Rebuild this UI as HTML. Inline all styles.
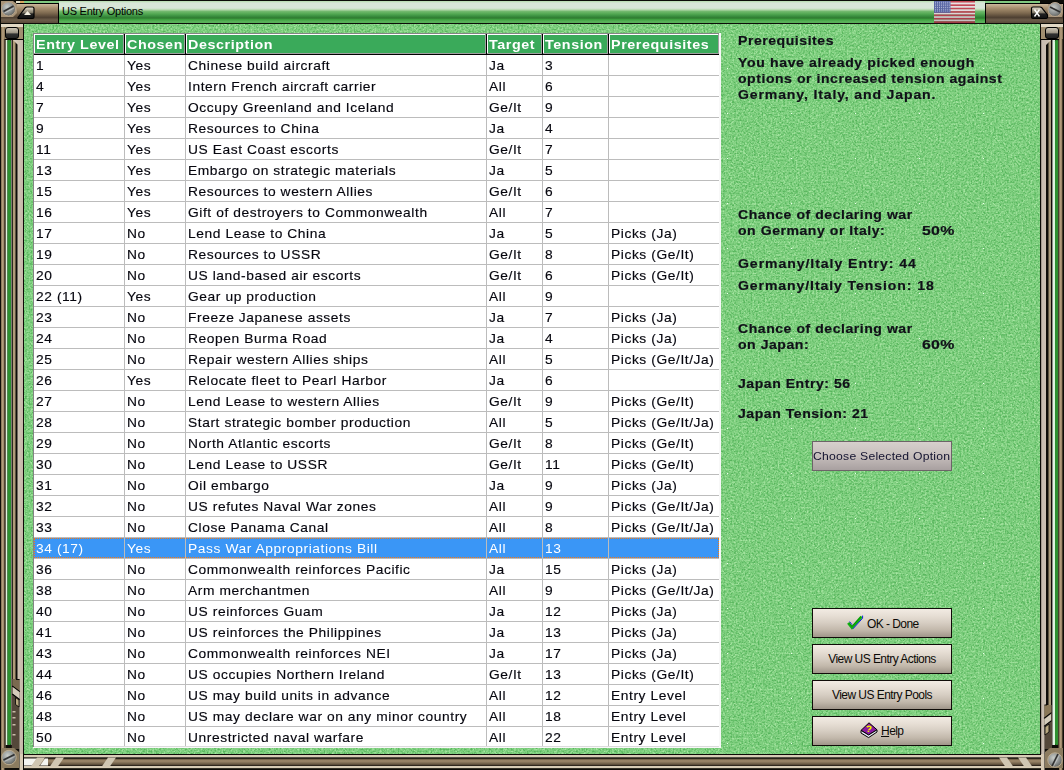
<!DOCTYPE html><html><head><meta charset="utf-8"><style>
*{margin:0;padding:0;box-sizing:border-box}
html,body{width:1064px;height:770px;overflow:hidden;background:#000}
body{position:relative;font-family:"Liberation Sans",sans-serif}
svg.chrome{position:absolute;left:0;top:0}
.a{position:absolute}
.t{position:absolute;white-space:nowrap;font-size:13px;letter-spacing:0.55px;color:#06060e;line-height:20px;-webkit-text-stroke:0.15px currentColor;transform:scaleX(1.06);transform-origin:0 0}
.h{position:absolute;white-space:nowrap;font-size:13.5px;font-weight:bold;letter-spacing:0.55px;color:#fff;line-height:18px;top:35.5px;transform:scaleX(1.06);transform-origin:0 0}
.p{position:absolute;white-space:nowrap;font-size:13px;font-weight:bold;letter-spacing:0.5px;color:#101018;line-height:16px;left:738px;transform:scaleX(1.08);transform-origin:0 0;-webkit-text-stroke:0.2px currentColor}
.btn{position:absolute;left:812px;width:140px;height:30px;border:1px solid #100c08;
 background:linear-gradient(#f2ebe3 0%,#e6ded4 25%,#d6cdc2 50%,#c2b8ab 75%,#a0968a 100%)}
.bt2{position:absolute;white-space:nowrap;font-size:12px;letter-spacing:-0.55px;color:#0c0a06;line-height:14px}
.bt{position:absolute;white-space:nowrap;font-size:11px;letter-spacing:-0.15px;color:#141008;width:100%;text-align:center;line-height:14px;left:0}
</style></head><body>
<svg class="chrome" width="1064" height="770" viewBox="0 0 1064 770">
<defs>
<linearGradient id="title" x1="0" y1="0" x2="0" y2="24" gradientUnits="userSpaceOnUse">
 <stop offset="0.042" stop-color="#b4dcac"/>
 <stop offset="0.125" stop-color="#d8e6d8"/>
 <stop offset="0.34" stop-color="#d8e6d8"/>
 <stop offset="0.40" stop-color="#b8dab0"/>
 <stop offset="0.48" stop-color="#70b86c"/>
 <stop offset="0.58" stop-color="#52a852"/>
 <stop offset="0.67" stop-color="#3a9040"/>
 <stop offset="0.75" stop-color="#2e7a30"/>
 <stop offset="0.81" stop-color="#3ea040"/>
 <stop offset="0.90" stop-color="#58b058"/>
 <stop offset="0.96" stop-color="#58b058"/>
</linearGradient>
<linearGradient id="tan" x1="0" y1="3" x2="0" y2="23" gradientUnits="userSpaceOnUse">
 <stop offset="0" stop-color="#d4c2a6"/>
 <stop offset="0.25" stop-color="#a89070"/>
 <stop offset="0.5" stop-color="#7e6a50"/>
 <stop offset="0.72" stop-color="#4e4032"/>
 <stop offset="0.85" stop-color="#6c5c4a"/>
 <stop offset="1" stop-color="#5a4a3a"/>
</linearGradient>
<linearGradient id="knob" x1="0" y1="0" x2="0" y2="1">
 <stop offset="0" stop-color="#d0c8b8"/>
 <stop offset="0.45" stop-color="#a09888"/>
 <stop offset="0.6" stop-color="#303030"/>
 <stop offset="1" stop-color="#202020"/>
</linearGradient>
<linearGradient id="btnA" x1="0" y1="0" x2="0" y2="1">
 <stop offset="0" stop-color="#e8e0d0"/>
 <stop offset="0.5" stop-color="#807868"/>
 <stop offset="0.6" stop-color="#202020"/>
 <stop offset="1" stop-color="#101010"/>
</linearGradient>
<radialGradient id="screw" cx="0.4" cy="0.35" r="0.7">
 <stop offset="0" stop-color="#c8ccc8"/>
 <stop offset="0.6" stop-color="#8c9090"/>
 <stop offset="1" stop-color="#5a5c58"/>
</radialGradient>
<linearGradient id="colL" x1="0" y1="0" x2="1" y2="0">
 <stop offset="0" stop-color="#7a6a4c"/>
 <stop offset="0.5" stop-color="#bca484"/>
 <stop offset="1" stop-color="#7a6a4c"/>
</linearGradient>
<linearGradient id="colR" x1="1" y1="0" x2="0" y2="0">
 <stop offset="0" stop-color="#7a6a4c"/>
 <stop offset="0.5" stop-color="#bca484"/>
 <stop offset="1" stop-color="#7a6a4c"/>
</linearGradient>
<linearGradient id="lt" x1="0" y1="0" x2="1" y2="0">
 <stop offset="0" stop-color="#dcd0c0"/>
 <stop offset="1" stop-color="#c4b8a8"/>
</linearGradient>
<linearGradient id="ltR" x1="0" y1="0" x2="1" y2="0">
 <stop offset="0" stop-color="#c8bcb0"/>
 <stop offset="0.7" stop-color="#ccc0b2"/>
 <stop offset="1" stop-color="#e4dccc"/>
</linearGradient>
<linearGradient id="bot" x1="0" y1="758" x2="0" y2="766" gradientUnits="userSpaceOnUse">
 <stop offset="0" stop-color="#4a3c2c"/>
 <stop offset="0.35" stop-color="#a08a6c"/>
 <stop offset="0.65" stop-color="#7a6850"/>
 <stop offset="1" stop-color="#3c3024"/>
</linearGradient>
<filter id="n1" x="0" y="0" width="100%" height="100%" color-interpolation-filters="sRGB">
 <feTurbulence type="fractalNoise" baseFrequency="0.55" numOctaves="2" seed="3"/>
 <feColorMatrix type="matrix" values="0 0 0 0 0.66  0 0 0 0 0.90  0 0 0 0 0.64  3.0 0 0 0 -1.3"/>
</filter>
<filter id="n2" x="0" y="0" width="100%" height="100%" color-interpolation-filters="sRGB">
 <feTurbulence type="fractalNoise" baseFrequency="0.55" numOctaves="2" seed="11"/>
 <feColorMatrix type="matrix" values="0 0 0 0 0.34  0 0 0 0 0.71  0 0 0 0 0.36  3.0 0 0 0 -1.3"/>
</filter>
</defs>
<rect x="0" y="0" width="1064" height="770" fill="#2a2218"/>
<rect x="0" y="0" width="1064" height="24" fill="#0c0c08"/>
<rect x="16" y="1" width="1024" height="2" fill="#80c880"/>
<rect x="16" y="1" width="4" height="2" fill="#e8e4d0"/>
<rect x="20" y="1" width="4" height="2" fill="#d8a860"/>
<rect x="59" y="1" width="926" height="22" fill="url(#title)"/>
<rect x="1" y="3" width="58" height="20" fill="#000"/>
<rect x="1" y="4" width="57" height="19" fill="url(#tan)"/>
<path d="M1 1 L13 1 L17 4 L17 13 L13 17 L1 17 Z" fill="#a89478"/>
<circle cx="8.5" cy="9" r="7" fill="url(#screw)" stroke="#b8a48c" stroke-width="1"/>
<path d="M3.5 11.5 L13.5 6" stroke="#303030" stroke-width="1.6"/>
<path d="M4.5 13 L14 8" stroke="#e0e0e0" stroke-width="0.8" opacity="0.7"/>
<path d="M18 17.5 L25.5 7.5 Q26 7 27 7 L32.5 7 Q34 7 34 8.5 L34 17 Q34 18.5 32.5 18.5 L19 18.5 Q17.5 18.5 18 17.5 Z" fill="url(#btnA)" stroke="#000" stroke-width="1.2"/>
<path d="M24 15 L27.5 11 L31 15 Z" fill="#f4f0e0"/>
<rect x="985" y="3" width="79" height="20" fill="#000"/>
<rect x="986" y="4" width="77" height="19" fill="url(#tan)"/>
<path d="M1048 4 L1062 4 L1063 12 L1062 17 L1048 17 Z" fill="#a89478"/>
<circle cx="1055" cy="9.5" r="7" fill="url(#screw)" stroke="#b8a48c" stroke-width="1"/>
<path d="M1050 7 L1060 12" stroke="#303030" stroke-width="1.6"/>
<path d="M1031.5 8.5 Q1031.5 7 1033 7 L1040 7 Q1041 7 1041.5 7.5 L1047.5 15 Q1048 18.5 1046 18.5 L1033 18.5 Q1031.5 18.5 1031.5 17 Z" fill="url(#btnA)" stroke="#000" stroke-width="1.2"/>
<path d="M1034.5 9.5 L1039.5 16.5 M1039.5 9.5 L1034.5 16.5" stroke="#fff" stroke-width="1.4"/>
<rect x="934" y="1.00" width="41" height="1.74" fill="#c84858"/><rect x="934" y="2.69" width="41" height="1.74" fill="#ece4e6"/><rect x="934" y="4.38" width="41" height="1.74" fill="#c84858"/><rect x="934" y="6.08" width="41" height="1.74" fill="#ece4e6"/><rect x="934" y="7.77" width="41" height="1.74" fill="#c84858"/><rect x="934" y="9.46" width="41" height="1.74" fill="#ece4e6"/><rect x="934" y="11.15" width="41" height="1.74" fill="#c84858"/><rect x="934" y="12.85" width="41" height="1.74" fill="#ece4e6"/><rect x="934" y="14.54" width="41" height="1.74" fill="#c84858"/><rect x="934" y="16.23" width="41" height="1.74" fill="#ece4e6"/><rect x="934" y="17.92" width="41" height="1.74" fill="#c84858"/><rect x="934" y="19.62" width="41" height="1.74" fill="#ece4e6"/><rect x="934" y="21.31" width="41" height="1.74" fill="#c84858"/><rect x="934" y="1" width="16.5" height="11.8" fill="#5c6aa8"/><rect x="935.00" y="1.80" width="0.9" height="0.9" fill="#c8cce8"/><rect x="937.05" y="1.80" width="0.9" height="0.9" fill="#c8cce8"/><rect x="939.10" y="1.80" width="0.9" height="0.9" fill="#c8cce8"/><rect x="941.15" y="1.80" width="0.9" height="0.9" fill="#c8cce8"/><rect x="943.20" y="1.80" width="0.9" height="0.9" fill="#c8cce8"/><rect x="945.25" y="1.80" width="0.9" height="0.9" fill="#c8cce8"/><rect x="947.30" y="1.80" width="0.9" height="0.9" fill="#c8cce8"/><rect x="949.35" y="1.80" width="0.9" height="0.9" fill="#c8cce8"/><rect x="935.00" y="3.55" width="0.9" height="0.9" fill="#c8cce8"/><rect x="937.05" y="3.55" width="0.9" height="0.9" fill="#c8cce8"/><rect x="939.10" y="3.55" width="0.9" height="0.9" fill="#c8cce8"/><rect x="941.15" y="3.55" width="0.9" height="0.9" fill="#c8cce8"/><rect x="943.20" y="3.55" width="0.9" height="0.9" fill="#c8cce8"/><rect x="945.25" y="3.55" width="0.9" height="0.9" fill="#c8cce8"/><rect x="947.30" y="3.55" width="0.9" height="0.9" fill="#c8cce8"/><rect x="949.35" y="3.55" width="0.9" height="0.9" fill="#c8cce8"/><rect x="935.00" y="5.30" width="0.9" height="0.9" fill="#c8cce8"/><rect x="937.05" y="5.30" width="0.9" height="0.9" fill="#c8cce8"/><rect x="939.10" y="5.30" width="0.9" height="0.9" fill="#c8cce8"/><rect x="941.15" y="5.30" width="0.9" height="0.9" fill="#c8cce8"/><rect x="943.20" y="5.30" width="0.9" height="0.9" fill="#c8cce8"/><rect x="945.25" y="5.30" width="0.9" height="0.9" fill="#c8cce8"/><rect x="947.30" y="5.30" width="0.9" height="0.9" fill="#c8cce8"/><rect x="949.35" y="5.30" width="0.9" height="0.9" fill="#c8cce8"/><rect x="935.00" y="7.05" width="0.9" height="0.9" fill="#c8cce8"/><rect x="937.05" y="7.05" width="0.9" height="0.9" fill="#c8cce8"/><rect x="939.10" y="7.05" width="0.9" height="0.9" fill="#c8cce8"/><rect x="941.15" y="7.05" width="0.9" height="0.9" fill="#c8cce8"/><rect x="943.20" y="7.05" width="0.9" height="0.9" fill="#c8cce8"/><rect x="945.25" y="7.05" width="0.9" height="0.9" fill="#c8cce8"/><rect x="947.30" y="7.05" width="0.9" height="0.9" fill="#c8cce8"/><rect x="949.35" y="7.05" width="0.9" height="0.9" fill="#c8cce8"/><rect x="935.00" y="8.80" width="0.9" height="0.9" fill="#c8cce8"/><rect x="937.05" y="8.80" width="0.9" height="0.9" fill="#c8cce8"/><rect x="939.10" y="8.80" width="0.9" height="0.9" fill="#c8cce8"/><rect x="941.15" y="8.80" width="0.9" height="0.9" fill="#c8cce8"/><rect x="943.20" y="8.80" width="0.9" height="0.9" fill="#c8cce8"/><rect x="945.25" y="8.80" width="0.9" height="0.9" fill="#c8cce8"/><rect x="947.30" y="8.80" width="0.9" height="0.9" fill="#c8cce8"/><rect x="949.35" y="8.80" width="0.9" height="0.9" fill="#c8cce8"/><rect x="935.00" y="10.55" width="0.9" height="0.9" fill="#c8cce8"/><rect x="937.05" y="10.55" width="0.9" height="0.9" fill="#c8cce8"/><rect x="939.10" y="10.55" width="0.9" height="0.9" fill="#c8cce8"/><rect x="941.15" y="10.55" width="0.9" height="0.9" fill="#c8cce8"/><rect x="943.20" y="10.55" width="0.9" height="0.9" fill="#c8cce8"/><rect x="945.25" y="10.55" width="0.9" height="0.9" fill="#c8cce8"/><rect x="947.30" y="10.55" width="0.9" height="0.9" fill="#c8cce8"/><rect x="949.35" y="10.55" width="0.9" height="0.9" fill="#c8cce8"/><defs><linearGradient id="flsh" x1="0" y1="0" x2="0" y2="1"><stop offset="0" stop-color="#000" stop-opacity="0"/><stop offset="0.5" stop-color="#000" stop-opacity="0.05"/><stop offset="1" stop-color="#000" stop-opacity="0.2"/></linearGradient></defs><rect x="934" y="1" width="41" height="22" fill="url(#flsh)"/>
<rect x="0" y="24" width="24" height="746" fill="#0e0c08"/>
<rect x="1" y="24" width="3.5" height="746" fill="url(#colL)"/>
<rect x="1" y="24" width="22" height="3" fill="#e2d8c4"/>
<rect x="1" y="27" width="22" height="12" fill="#a08e70"/>
<rect x="1" y="27" width="4" height="12" fill="url(#colL)"/>
<rect x="5.5" y="27.5" width="13" height="11" rx="2.5" fill="url(#knob)" stroke="#000" stroke-width="1"/>
<rect x="5" y="39" width="19" height="1" fill="#000"/>
<rect x="4.5" y="40" width="1.3" height="708" fill="#5a4a38"/>
<rect x="5.8" y="40" width="1.7" height="705" fill="#e0f4e0"/>
<rect x="7.5" y="40" width="3.5" height="705" rx="1.2" fill="#2e9030"/>
<rect x="11" y="40" width="0.8" height="705" fill="#a09890"/>
<rect x="12.8" y="40" width="2.7" height="639" fill="#b09c78"/>
<rect x="11.8" y="679" width="7.6" height="70" fill="#54483a"/>
<path d="M13 40 L23 40 L23 754 L19.4 754 L19.4 679 L17.5 679 L17.5 44.5 Z" fill="url(#lt)"/>
<path d="M12.7 679 L19.4 679 L19.4 691 L12.7 686 Z" fill="#7a6a50"/>
<path d="M12.2 686 L19.8 691.6" stroke="#000" stroke-width="1.1"/>
<path d="M12.7 687 L19.4 692 L19.4 699 L12.7 694 Z" fill="#d4ccba"/>
<path d="M12.2 694 L19.8 699.6" stroke="#000" stroke-width="1.1"/>
<path d="M15.5 697.5 L19 700 L19 707 L15.5 704.5 Z" fill="#b8a880" stroke="#000" stroke-width="0.8"/>
<rect x="16" y="679" width="3.4" height="0.9" fill="#000"/>
<rect x="12.5" y="711" width="3" height="1.5" fill="#c8bca8"/>
<rect x="12.5" y="717" width="3" height="1.5" fill="#c8bca8"/>
<rect x="12.5" y="724" width="3" height="1.5" fill="#c8bca8"/>
<rect x="12.5" y="734" width="3" height="1.5" fill="#c8bca8"/>
<rect x="19.4" y="40" width="3.6" height="730" fill="url(#lt)" opacity="0"/>
<rect x="23" y="24" width="1" height="746" fill="#0c0a06"/>
<rect x="19.5" y="754" width="3.5" height="16" fill="#d8ccb6"/>
<path d="M1 748 L14 748 L19 752 L19 768 L1 768 Z" fill="#8c7c60"/>
<circle cx="9" cy="757.5" r="7.2" fill="url(#screw)" stroke="#bcac90" stroke-width="1"/>
<path d="M3.5 760 L14.5 754.5" stroke="#303030" stroke-width="1.6"/>
<path d="M4.5 761.5 L15 756.5" stroke="#e8e8e8" stroke-width="0.7" opacity="0.6"/>
<rect x="1040" y="24" width="24" height="746" fill="#0e0c08"/>
<rect x="1059" y="24" width="3.5" height="746" fill="url(#colR)"/>
<rect x="1041" y="24" width="22" height="3" fill="#e2d8c4"/>
<rect x="1041" y="27" width="22" height="12" fill="#a08e70"/>
<rect x="1059" y="27" width="4" height="12" fill="url(#colR)"/>
<rect x="1045.5" y="27.5" width="13" height="11" rx="2.5" fill="url(#knob)" stroke="#000" stroke-width="1"/>
<rect x="1040" y="39" width="19" height="1" fill="#000"/>
<rect x="1052" y="40" width="1" height="705" fill="#909088"/>
<rect x="1053" y="40" width="2" height="705" fill="#e0f4e0"/>
<rect x="1055" y="40" width="3.3" height="705" rx="1.2" fill="#2e9030"/>
<rect x="1058.3" y="40" width="0.7" height="708" fill="#5a4a38"/>
<rect x="1048.5" y="40" width="2.5" height="665" fill="#a89878"/>
<rect x="1044.5" y="705" width="7.5" height="44" fill="#54483a"/>
<path d="M1051 40 L1041.2 40 L1041.2 754 L1044.5 754 L1044.5 705 L1046 705 L1046 45 Z" fill="url(#ltR)"/>
<path d="M1044.5 705 L1051 705 L1051 713 L1044.5 718 Z" fill="#8a7858"/>
<path d="M1044 718.4 L1051.5 712.6" stroke="#000" stroke-width="1.1"/>
<path d="M1044.5 719 L1051 714 L1051 721 L1044.5 726 Z" fill="#d4ccba"/>
<path d="M1044 726.4 L1051.5 720.6" stroke="#000" stroke-width="1.1"/>
<path d="M1045 727 L1049 724 L1049 732 L1045 735 Z" fill="#b8a880" stroke="#000" stroke-width="0.8"/>
<rect x="1044.5" y="704.5" width="2.5" height="0.9" fill="#000"/>
<rect x="1040" y="24" width="1" height="746" fill="#0c0a06"/>
<rect x="1041" y="754" width="3.5" height="16" fill="#d8ccb6"/>
<path d="M1063 748 L1050 748 L1045 752 L1045 768 L1063 768 Z" fill="#8c7c60"/>
<circle cx="1055" cy="760" r="7.2" fill="url(#screw)" stroke="#bcac90" stroke-width="1"/>
<path d="M1052 766 L1058 754" stroke="#303030" stroke-width="1.6"/>
<path d="M1053.5 766.5 L1059.5 755" stroke="#e8e8e8" stroke-width="0.7" opacity="0.6"/>
<rect x="24" y="754" width="1017" height="16" fill="#0c0a06"/>
<rect x="24" y="755" width="1020" height="2.6" fill="#d8ccb6"/>
<rect x="24" y="757.6" width="1017" height="9" fill="#0c0a06"/>
<rect x="24" y="758.6" width="1017" height="7" fill="url(#bot)"/>
<rect x="24" y="766" width="1020" height="2.2" fill="#d8ccb6"/>
<path d="M24 758.6 L37 758.6 L32 765.6 L24 765.6 Z" fill="#f4f4f0"/>
<path d="M45 758.6 L48 758.6 L48 765.6 L40 765.6 Z" fill="#f4f4f0"/>
<path d="M37 757.6 L45 757.6 L39 766.2 L31 766.2 Z" fill="#d0c6b2"/>
<path d="M56 757.6 L64 757.6 L58 766.2 L50 766.2 Z" fill="#d0c6b2"/>
<path d="M108 757.6 L116 757.6 L110 766.2 L102 766.2 Z" fill="#d0c6b2"/>
<path d="M999 757.6 L1007 757.6 L1013 766.2 L1005 766.2 Z" fill="#d0c6b2"/>
<path d="M1018 757.6 L1026 757.6 L1032 766.2 L1024 766.2 Z" fill="#d0c6b2"/>
<rect x="24" y="24" width="1016" height="730" fill="#80d080"/>
<rect x="24" y="24" width="1016" height="730" filter="url(#n1)"/>
<rect x="24" y="24" width="1016" height="730" filter="url(#n2)"/>
<defs><pattern id="dots" x="23" y="23" width="64" height="45" patternUnits="userSpaceOnUse"><rect x="0" y="0" width="1" height="1" fill="#f0fff0"/></pattern></defs>
<rect x="24" y="24" width="1016" height="730" fill="url(#dots)"/>
</svg>
<div class="a" style="left:62px;top:5px;font-size:11px;line-height:13px;color:#000;white-space:nowrap;letter-spacing:-0.25px">US Entry Options</div>
<div class="a" style="left:33px;top:33px;width:688px;height:715px;background:#f8f8f8"></div>
<div class="a" style="left:33px;top:33px;width:686px;height:714px;background:#848484"></div>
<div class="a" style="left:34px;top:34px;width:685px;height:713px;background:#fff"></div>
<div class="a" style="left:34px;top:34px;width:91px;height:21px;background:#000"></div>
<div class="a" style="left:34px;top:34px;width:90px;height:20px;background:#a0a0a0"></div>
<div class="a" style="left:34px;top:34px;width:89px;height:19px;background:#fff"></div>
<div class="a" style="left:35px;top:35px;width:88px;height:18px;background:#3aaa5a"></div>
<div class="h" style="left:36px">Entry Level</div>
<div class="a" style="left:125px;top:34px;width:61px;height:21px;background:#000"></div>
<div class="a" style="left:125px;top:34px;width:60px;height:20px;background:#a0a0a0"></div>
<div class="a" style="left:125px;top:34px;width:59px;height:19px;background:#fff"></div>
<div class="a" style="left:126px;top:35px;width:58px;height:18px;background:#3aaa5a"></div>
<div class="h" style="left:127px">Chosen</div>
<div class="a" style="left:186px;top:34px;width:301px;height:21px;background:#000"></div>
<div class="a" style="left:186px;top:34px;width:300px;height:20px;background:#a0a0a0"></div>
<div class="a" style="left:186px;top:34px;width:299px;height:19px;background:#fff"></div>
<div class="a" style="left:187px;top:35px;width:298px;height:18px;background:#3aaa5a"></div>
<div class="h" style="left:188px">Description</div>
<div class="a" style="left:487px;top:34px;width:56px;height:21px;background:#000"></div>
<div class="a" style="left:487px;top:34px;width:55px;height:20px;background:#a0a0a0"></div>
<div class="a" style="left:487px;top:34px;width:54px;height:19px;background:#fff"></div>
<div class="a" style="left:488px;top:35px;width:53px;height:18px;background:#3aaa5a"></div>
<div class="h" style="left:489px">Target</div>
<div class="a" style="left:543px;top:34px;width:66px;height:21px;background:#000"></div>
<div class="a" style="left:543px;top:34px;width:65px;height:20px;background:#a0a0a0"></div>
<div class="a" style="left:543px;top:34px;width:64px;height:19px;background:#fff"></div>
<div class="a" style="left:544px;top:35px;width:63px;height:18px;background:#3aaa5a"></div>
<div class="h" style="left:545px">Tension</div>
<div class="a" style="left:609px;top:34px;width:111px;height:21px;background:#000"></div>
<div class="a" style="left:609px;top:34px;width:110px;height:20px;background:#a0a0a0"></div>
<div class="a" style="left:609px;top:34px;width:109px;height:19px;background:#fff"></div>
<div class="a" style="left:610px;top:35px;width:108px;height:18px;background:#3aaa5a"></div>
<div class="h" style="left:611px">Prerequisites</div>
<div class="a" style="left:719px;top:33px;width:2px;height:715px;background:#f8f8f8"></div>
<div class="a" style="left:34px;top:75px;width:685px;height:1px;background:#bcbcbc"></div>
<div class="t" style="left:36px;top:56px;color:#06060e">1</div>
<div class="t" style="left:127px;top:56px;color:#06060e">Yes</div>
<div class="t" style="left:188px;top:56px;color:#06060e">Chinese build aircraft</div>
<div class="t" style="left:489px;top:56px;color:#06060e">Ja</div>
<div class="t" style="left:545px;top:56px;color:#06060e">3</div>
<div class="a" style="left:34px;top:96px;width:685px;height:1px;background:#bcbcbc"></div>
<div class="t" style="left:36px;top:77px;color:#06060e">4</div>
<div class="t" style="left:127px;top:77px;color:#06060e">Yes</div>
<div class="t" style="left:188px;top:77px;color:#06060e">Intern French aircraft carrier</div>
<div class="t" style="left:489px;top:77px;color:#06060e">All</div>
<div class="t" style="left:545px;top:77px;color:#06060e">6</div>
<div class="a" style="left:34px;top:117px;width:685px;height:1px;background:#bcbcbc"></div>
<div class="t" style="left:36px;top:98px;color:#06060e">7</div>
<div class="t" style="left:127px;top:98px;color:#06060e">Yes</div>
<div class="t" style="left:188px;top:98px;color:#06060e">Occupy Greenland and Iceland</div>
<div class="t" style="left:489px;top:98px;color:#06060e">Ge/It</div>
<div class="t" style="left:545px;top:98px;color:#06060e">9</div>
<div class="a" style="left:34px;top:138px;width:685px;height:1px;background:#bcbcbc"></div>
<div class="t" style="left:36px;top:119px;color:#06060e">9</div>
<div class="t" style="left:127px;top:119px;color:#06060e">Yes</div>
<div class="t" style="left:188px;top:119px;color:#06060e">Resources to China</div>
<div class="t" style="left:489px;top:119px;color:#06060e">Ja</div>
<div class="t" style="left:545px;top:119px;color:#06060e">4</div>
<div class="a" style="left:34px;top:159px;width:685px;height:1px;background:#bcbcbc"></div>
<div class="t" style="left:36px;top:140px;color:#06060e">11</div>
<div class="t" style="left:127px;top:140px;color:#06060e">Yes</div>
<div class="t" style="left:188px;top:140px;color:#06060e">US East Coast escorts</div>
<div class="t" style="left:489px;top:140px;color:#06060e">Ge/It</div>
<div class="t" style="left:545px;top:140px;color:#06060e">7</div>
<div class="a" style="left:34px;top:180px;width:685px;height:1px;background:#bcbcbc"></div>
<div class="t" style="left:36px;top:161px;color:#06060e">13</div>
<div class="t" style="left:127px;top:161px;color:#06060e">Yes</div>
<div class="t" style="left:188px;top:161px;color:#06060e">Embargo on strategic materials</div>
<div class="t" style="left:489px;top:161px;color:#06060e">Ja</div>
<div class="t" style="left:545px;top:161px;color:#06060e">5</div>
<div class="a" style="left:34px;top:201px;width:685px;height:1px;background:#bcbcbc"></div>
<div class="t" style="left:36px;top:182px;color:#06060e">15</div>
<div class="t" style="left:127px;top:182px;color:#06060e">Yes</div>
<div class="t" style="left:188px;top:182px;color:#06060e">Resources to western Allies</div>
<div class="t" style="left:489px;top:182px;color:#06060e">Ge/It</div>
<div class="t" style="left:545px;top:182px;color:#06060e">6</div>
<div class="a" style="left:34px;top:222px;width:685px;height:1px;background:#bcbcbc"></div>
<div class="t" style="left:36px;top:203px;color:#06060e">16</div>
<div class="t" style="left:127px;top:203px;color:#06060e">Yes</div>
<div class="t" style="left:188px;top:203px;color:#06060e">Gift of destroyers to Commonwealth</div>
<div class="t" style="left:489px;top:203px;color:#06060e">All</div>
<div class="t" style="left:545px;top:203px;color:#06060e">7</div>
<div class="a" style="left:34px;top:243px;width:685px;height:1px;background:#bcbcbc"></div>
<div class="t" style="left:36px;top:224px;color:#06060e">17</div>
<div class="t" style="left:127px;top:224px;color:#06060e">No</div>
<div class="t" style="left:188px;top:224px;color:#06060e">Lend Lease to China</div>
<div class="t" style="left:489px;top:224px;color:#06060e">Ja</div>
<div class="t" style="left:545px;top:224px;color:#06060e">5</div>
<div class="t" style="left:611px;top:224px;color:#06060e">Picks (Ja)</div>
<div class="a" style="left:34px;top:264px;width:685px;height:1px;background:#bcbcbc"></div>
<div class="t" style="left:36px;top:245px;color:#06060e">19</div>
<div class="t" style="left:127px;top:245px;color:#06060e">No</div>
<div class="t" style="left:188px;top:245px;color:#06060e">Resources to USSR</div>
<div class="t" style="left:489px;top:245px;color:#06060e">Ge/It</div>
<div class="t" style="left:545px;top:245px;color:#06060e">8</div>
<div class="t" style="left:611px;top:245px;color:#06060e">Picks (Ge/It)</div>
<div class="a" style="left:34px;top:285px;width:685px;height:1px;background:#bcbcbc"></div>
<div class="t" style="left:36px;top:266px;color:#06060e">20</div>
<div class="t" style="left:127px;top:266px;color:#06060e">No</div>
<div class="t" style="left:188px;top:266px;color:#06060e">US land-based air escorts</div>
<div class="t" style="left:489px;top:266px;color:#06060e">Ge/It</div>
<div class="t" style="left:545px;top:266px;color:#06060e">6</div>
<div class="t" style="left:611px;top:266px;color:#06060e">Picks (Ge/It)</div>
<div class="a" style="left:34px;top:306px;width:685px;height:1px;background:#bcbcbc"></div>
<div class="t" style="left:36px;top:287px;color:#06060e">22 (11)</div>
<div class="t" style="left:127px;top:287px;color:#06060e">Yes</div>
<div class="t" style="left:188px;top:287px;color:#06060e">Gear up production</div>
<div class="t" style="left:489px;top:287px;color:#06060e">All</div>
<div class="t" style="left:545px;top:287px;color:#06060e">9</div>
<div class="a" style="left:34px;top:327px;width:685px;height:1px;background:#bcbcbc"></div>
<div class="t" style="left:36px;top:308px;color:#06060e">23</div>
<div class="t" style="left:127px;top:308px;color:#06060e">No</div>
<div class="t" style="left:188px;top:308px;color:#06060e">Freeze Japanese assets</div>
<div class="t" style="left:489px;top:308px;color:#06060e">Ja</div>
<div class="t" style="left:545px;top:308px;color:#06060e">7</div>
<div class="t" style="left:611px;top:308px;color:#06060e">Picks (Ja)</div>
<div class="a" style="left:34px;top:348px;width:685px;height:1px;background:#bcbcbc"></div>
<div class="t" style="left:36px;top:329px;color:#06060e">24</div>
<div class="t" style="left:127px;top:329px;color:#06060e">No</div>
<div class="t" style="left:188px;top:329px;color:#06060e">Reopen Burma Road</div>
<div class="t" style="left:489px;top:329px;color:#06060e">Ja</div>
<div class="t" style="left:545px;top:329px;color:#06060e">4</div>
<div class="t" style="left:611px;top:329px;color:#06060e">Picks (Ja)</div>
<div class="a" style="left:34px;top:369px;width:685px;height:1px;background:#bcbcbc"></div>
<div class="t" style="left:36px;top:350px;color:#06060e">25</div>
<div class="t" style="left:127px;top:350px;color:#06060e">No</div>
<div class="t" style="left:188px;top:350px;color:#06060e">Repair western Allies ships</div>
<div class="t" style="left:489px;top:350px;color:#06060e">All</div>
<div class="t" style="left:545px;top:350px;color:#06060e">5</div>
<div class="t" style="left:611px;top:350px;color:#06060e">Picks (Ge/It/Ja)</div>
<div class="a" style="left:34px;top:390px;width:685px;height:1px;background:#bcbcbc"></div>
<div class="t" style="left:36px;top:371px;color:#06060e">26</div>
<div class="t" style="left:127px;top:371px;color:#06060e">Yes</div>
<div class="t" style="left:188px;top:371px;color:#06060e">Relocate fleet to Pearl Harbor</div>
<div class="t" style="left:489px;top:371px;color:#06060e">Ja</div>
<div class="t" style="left:545px;top:371px;color:#06060e">6</div>
<div class="a" style="left:34px;top:411px;width:685px;height:1px;background:#bcbcbc"></div>
<div class="t" style="left:36px;top:392px;color:#06060e">27</div>
<div class="t" style="left:127px;top:392px;color:#06060e">No</div>
<div class="t" style="left:188px;top:392px;color:#06060e">Lend Lease to western Allies</div>
<div class="t" style="left:489px;top:392px;color:#06060e">Ge/It</div>
<div class="t" style="left:545px;top:392px;color:#06060e">9</div>
<div class="t" style="left:611px;top:392px;color:#06060e">Picks (Ge/It)</div>
<div class="a" style="left:34px;top:432px;width:685px;height:1px;background:#bcbcbc"></div>
<div class="t" style="left:36px;top:413px;color:#06060e">28</div>
<div class="t" style="left:127px;top:413px;color:#06060e">No</div>
<div class="t" style="left:188px;top:413px;color:#06060e">Start strategic bomber production</div>
<div class="t" style="left:489px;top:413px;color:#06060e">All</div>
<div class="t" style="left:545px;top:413px;color:#06060e">5</div>
<div class="t" style="left:611px;top:413px;color:#06060e">Picks (Ge/It/Ja)</div>
<div class="a" style="left:34px;top:453px;width:685px;height:1px;background:#bcbcbc"></div>
<div class="t" style="left:36px;top:434px;color:#06060e">29</div>
<div class="t" style="left:127px;top:434px;color:#06060e">No</div>
<div class="t" style="left:188px;top:434px;color:#06060e">North Atlantic escorts</div>
<div class="t" style="left:489px;top:434px;color:#06060e">Ge/It</div>
<div class="t" style="left:545px;top:434px;color:#06060e">8</div>
<div class="t" style="left:611px;top:434px;color:#06060e">Picks (Ge/It)</div>
<div class="a" style="left:34px;top:474px;width:685px;height:1px;background:#bcbcbc"></div>
<div class="t" style="left:36px;top:455px;color:#06060e">30</div>
<div class="t" style="left:127px;top:455px;color:#06060e">No</div>
<div class="t" style="left:188px;top:455px;color:#06060e">Lend Lease to USSR</div>
<div class="t" style="left:489px;top:455px;color:#06060e">Ge/It</div>
<div class="t" style="left:545px;top:455px;color:#06060e">11</div>
<div class="t" style="left:611px;top:455px;color:#06060e">Picks (Ge/It)</div>
<div class="a" style="left:34px;top:495px;width:685px;height:1px;background:#bcbcbc"></div>
<div class="t" style="left:36px;top:476px;color:#06060e">31</div>
<div class="t" style="left:127px;top:476px;color:#06060e">No</div>
<div class="t" style="left:188px;top:476px;color:#06060e">Oil embargo</div>
<div class="t" style="left:489px;top:476px;color:#06060e">Ja</div>
<div class="t" style="left:545px;top:476px;color:#06060e">9</div>
<div class="t" style="left:611px;top:476px;color:#06060e">Picks (Ja)</div>
<div class="a" style="left:34px;top:516px;width:685px;height:1px;background:#bcbcbc"></div>
<div class="t" style="left:36px;top:497px;color:#06060e">32</div>
<div class="t" style="left:127px;top:497px;color:#06060e">No</div>
<div class="t" style="left:188px;top:497px;color:#06060e">US refutes Naval War zones</div>
<div class="t" style="left:489px;top:497px;color:#06060e">All</div>
<div class="t" style="left:545px;top:497px;color:#06060e">9</div>
<div class="t" style="left:611px;top:497px;color:#06060e">Picks (Ge/It/Ja)</div>
<div class="a" style="left:34px;top:537px;width:685px;height:1px;background:#bcbcbc"></div>
<div class="t" style="left:36px;top:518px;color:#06060e">33</div>
<div class="t" style="left:127px;top:518px;color:#06060e">No</div>
<div class="t" style="left:188px;top:518px;color:#06060e">Close Panama Canal</div>
<div class="t" style="left:489px;top:518px;color:#06060e">All</div>
<div class="t" style="left:545px;top:518px;color:#06060e">8</div>
<div class="t" style="left:611px;top:518px;color:#06060e">Picks (Ge/It/Ja)</div>
<div class="a" style="left:34px;top:538px;width:685px;height:20px;background:#3a96f6;border:1px dotted #f07818"></div>
<div class="a" style="left:34px;top:558px;width:685px;height:1px;background:#bcbcbc"></div>
<div class="t" style="left:36px;top:539px;color:#fff;-webkit-text-stroke:0">34 (17)</div>
<div class="t" style="left:127px;top:539px;color:#fff;-webkit-text-stroke:0">Yes</div>
<div class="t" style="left:188px;top:539px;color:#fff;-webkit-text-stroke:0">Pass War Appropriations Bill</div>
<div class="t" style="left:489px;top:539px;color:#fff;-webkit-text-stroke:0">All</div>
<div class="t" style="left:545px;top:539px;color:#fff;-webkit-text-stroke:0">13</div>
<div class="a" style="left:34px;top:579px;width:685px;height:1px;background:#bcbcbc"></div>
<div class="t" style="left:36px;top:560px;color:#06060e">36</div>
<div class="t" style="left:127px;top:560px;color:#06060e">No</div>
<div class="t" style="left:188px;top:560px;color:#06060e">Commonwealth reinforces Pacific</div>
<div class="t" style="left:489px;top:560px;color:#06060e">Ja</div>
<div class="t" style="left:545px;top:560px;color:#06060e">15</div>
<div class="t" style="left:611px;top:560px;color:#06060e">Picks (Ja)</div>
<div class="a" style="left:34px;top:600px;width:685px;height:1px;background:#bcbcbc"></div>
<div class="t" style="left:36px;top:581px;color:#06060e">38</div>
<div class="t" style="left:127px;top:581px;color:#06060e">No</div>
<div class="t" style="left:188px;top:581px;color:#06060e">Arm merchantmen</div>
<div class="t" style="left:489px;top:581px;color:#06060e">All</div>
<div class="t" style="left:545px;top:581px;color:#06060e">9</div>
<div class="t" style="left:611px;top:581px;color:#06060e">Picks (Ge/It/Ja)</div>
<div class="a" style="left:34px;top:621px;width:685px;height:1px;background:#bcbcbc"></div>
<div class="t" style="left:36px;top:602px;color:#06060e">40</div>
<div class="t" style="left:127px;top:602px;color:#06060e">No</div>
<div class="t" style="left:188px;top:602px;color:#06060e">US reinforces Guam</div>
<div class="t" style="left:489px;top:602px;color:#06060e">Ja</div>
<div class="t" style="left:545px;top:602px;color:#06060e">12</div>
<div class="t" style="left:611px;top:602px;color:#06060e">Picks (Ja)</div>
<div class="a" style="left:34px;top:642px;width:685px;height:1px;background:#bcbcbc"></div>
<div class="t" style="left:36px;top:623px;color:#06060e">41</div>
<div class="t" style="left:127px;top:623px;color:#06060e">No</div>
<div class="t" style="left:188px;top:623px;color:#06060e">US reinforces the Philippines</div>
<div class="t" style="left:489px;top:623px;color:#06060e">Ja</div>
<div class="t" style="left:545px;top:623px;color:#06060e">13</div>
<div class="t" style="left:611px;top:623px;color:#06060e">Picks (Ja)</div>
<div class="a" style="left:34px;top:663px;width:685px;height:1px;background:#bcbcbc"></div>
<div class="t" style="left:36px;top:644px;color:#06060e">43</div>
<div class="t" style="left:127px;top:644px;color:#06060e">No</div>
<div class="t" style="left:188px;top:644px;color:#06060e">Commonwealth reinforces NEI</div>
<div class="t" style="left:489px;top:644px;color:#06060e">Ja</div>
<div class="t" style="left:545px;top:644px;color:#06060e">17</div>
<div class="t" style="left:611px;top:644px;color:#06060e">Picks (Ja)</div>
<div class="a" style="left:34px;top:684px;width:685px;height:1px;background:#bcbcbc"></div>
<div class="t" style="left:36px;top:665px;color:#06060e">44</div>
<div class="t" style="left:127px;top:665px;color:#06060e">No</div>
<div class="t" style="left:188px;top:665px;color:#06060e">US occupies Northern Ireland</div>
<div class="t" style="left:489px;top:665px;color:#06060e">Ge/It</div>
<div class="t" style="left:545px;top:665px;color:#06060e">13</div>
<div class="t" style="left:611px;top:665px;color:#06060e">Picks (Ge/It)</div>
<div class="a" style="left:34px;top:705px;width:685px;height:1px;background:#bcbcbc"></div>
<div class="t" style="left:36px;top:686px;color:#06060e">46</div>
<div class="t" style="left:127px;top:686px;color:#06060e">No</div>
<div class="t" style="left:188px;top:686px;color:#06060e">US may build units in advance</div>
<div class="t" style="left:489px;top:686px;color:#06060e">All</div>
<div class="t" style="left:545px;top:686px;color:#06060e">12</div>
<div class="t" style="left:611px;top:686px;color:#06060e">Entry Level</div>
<div class="a" style="left:34px;top:726px;width:685px;height:1px;background:#bcbcbc"></div>
<div class="t" style="left:36px;top:707px;color:#06060e">48</div>
<div class="t" style="left:127px;top:707px;color:#06060e">No</div>
<div class="t" style="left:188px;top:707px;color:#06060e">US may declare war on any minor country</div>
<div class="t" style="left:489px;top:707px;color:#06060e">All</div>
<div class="t" style="left:545px;top:707px;color:#06060e">18</div>
<div class="t" style="left:611px;top:707px;color:#06060e">Entry Level</div>
<div class="a" style="left:34px;top:746px;width:685px;height:1px;background:#dcdcdc"></div>
<div class="t" style="left:36px;top:728px;color:#06060e">50</div>
<div class="t" style="left:127px;top:728px;color:#06060e">No</div>
<div class="t" style="left:188px;top:728px;color:#06060e">Unrestricted naval warfare</div>
<div class="t" style="left:489px;top:728px;color:#06060e">All</div>
<div class="t" style="left:545px;top:728px;color:#06060e">22</div>
<div class="t" style="left:611px;top:728px;color:#06060e">Entry Level</div>
<div class="a" style="left:124px;top:55px;width:1px;height:691px;background:#bcbcbc"></div>
<div class="a" style="left:185px;top:55px;width:1px;height:691px;background:#bcbcbc"></div>
<div class="a" style="left:486px;top:55px;width:1px;height:691px;background:#bcbcbc"></div>
<div class="a" style="left:542px;top:55px;width:1px;height:691px;background:#bcbcbc"></div>
<div class="a" style="left:608px;top:55px;width:1px;height:691px;background:#bcbcbc"></div>
<div class="p" style="top:33px">Prerequisites</div>
<div class="p" style="top:55px;letter-spacing:0.6px">You have already picked enough</div>
<div class="p" style="top:71px">options or increased tension against</div>
<div class="p" style="top:87px;letter-spacing:0.8px">Germany, Italy, and Japan.</div>
<div class="p" style="top:207px">Chance of declaring war</div>
<div class="p" style="top:223px">on Germany or Italy:</div>
<div class="p" style="top:256px;letter-spacing:0.88px">Germany/Italy Entry: 44</div>
<div class="p" style="top:278px;letter-spacing:0.85px">Germany/Italy Tension: 18</div>
<div class="p" style="top:321px">Chance of declaring war</div>
<div class="p" style="top:337px">on Japan:</div>
<div class="p" style="top:376px">Japan Entry: 56</div>
<div class="p" style="top:406px">Japan Tension: 21</div>
<div class="p" style="top:223px;left:922px;letter-spacing:0.2px;transform:scaleX(1.22)">50%</div>
<div class="p" style="top:337px;left:922px;letter-spacing:0.2px;transform:scaleX(1.22)">60%</div>
<div class="a" style="left:812px;top:441px;width:140px;height:30px;border:1px solid #6c6468;background:linear-gradient(#d6d0cc,#c6bebc 50%,#a8a0a0)"></div>
<div class="a" style="left:813px;top:449px;font-size:11.5px;line-height:14px;color:#141430;white-space:nowrap;letter-spacing:0.22px;transform:scaleX(1.06);transform-origin:0 0">Choose Selected Option</div>
<div class="btn" style="top:608px"></div>
<div class="btn" style="top:644px"></div>
<div class="btn" style="top:680px"></div>
<div class="btn" style="top:716px"></div>
<div class="bt2" style="left:867px;top:617px">OK - Done</div>
<div class="bt2" style="left:812px;width:140px;text-align:center;top:652px">View US Entry Actions</div>
<div class="bt2" style="left:812px;width:140px;text-align:center;top:688px">View US Entry Pools</div>
<div class="bt2" style="left:881px;top:724px"><u style="text-underline-offset:1px">H</u>elp</div>
<svg class="a" style="left:0;top:0;pointer-events:none" width="1064" height="770" viewBox="0 0 1064 770">
<path d="M848.2 622.8 L852 627.6 L861.6 616.6" stroke="#10b010" stroke-width="2.8" fill="none" stroke-linejoin="miter"/>
<path d="M849.6 621.6 L852 624.6 M852.9 628.9 L862.6 618.2 L862.6 615.6" stroke="#1020e0" stroke-width="1" fill="none"/>
<path d="M849.5 623.5 L852 626.5 L861 616.5" stroke="#008000" stroke-width="1" fill="none" opacity="0.6"/>
<path d="M869 722.8 L877 729.8 L868.6 735 L861 730.4 Z" fill="#8a1aa0" stroke="#000" stroke-width="1"/>
<path d="M861 730.4 L868.6 735 L877 729.8 L877 732 L868.6 737.6 L861 733 Z" fill="#e8e8f4" stroke="#000" stroke-width="1"/>
<path d="M866.8 727.2 Q868.6 725.6 870.6 726.6 Q871.6 728 869.6 729.2 L868.6 730" stroke="#f0f000" stroke-width="1.6" fill="none"/>
<rect x="867.6" y="730.6" width="1.6" height="1.4" fill="#f0f000"/>
</svg>
</body></html>
